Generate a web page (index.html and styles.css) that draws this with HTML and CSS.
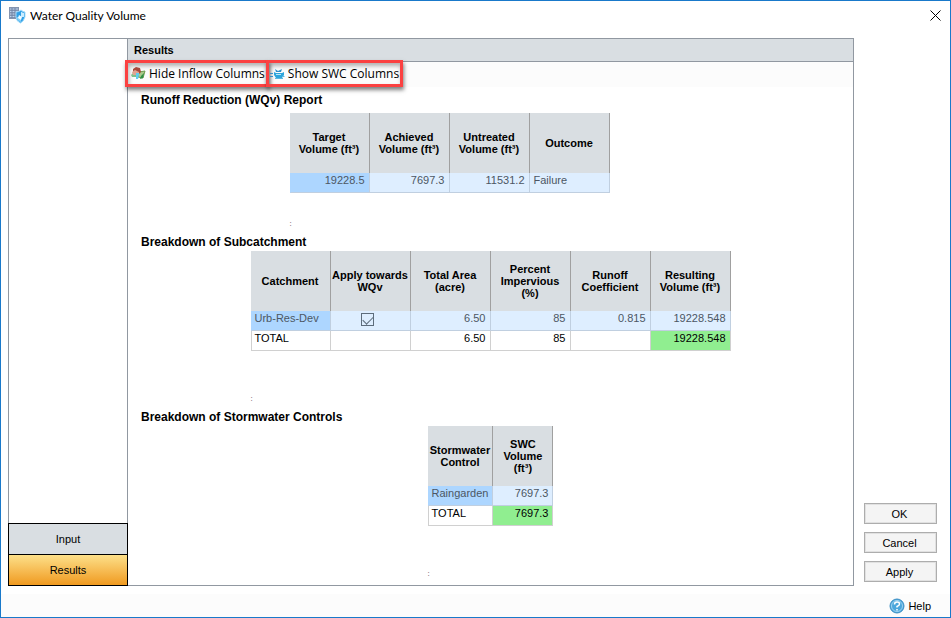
FILE: index.html
```html
<!DOCTYPE html>
<html lang="en">
<head>
    <meta charset="UTF-8">
    <title>Water Quality Volume</title>
    <link rel="stylesheet" href="styles.css">
</head>
<body>
    <div class="window">
        <header class="titlebar">
            <svg class="app-icon" width="17" height="17" viewBox="0 0 17 17">
                <rect x="0" y="0" width="10" height="12" fill="#8494b0"/>
                <path d="M1 2h8M1 4.5h8M1 7h8M1 9.5h8" stroke="#bfd3ec"/>
                <path d="M3 1v10M6 1v10" stroke="#6f84a8"/>
                <path d="M7 5q3 0 5-2 2 2 4 2v5q-1 4-4.500 6Q7 14 7 10z" fill="#2f9fe6" stroke="#a5dcfa"/>
                <path d="M12 4.5q1 1 3 1.500V10h-3z" fill="#c9ecff"/>
                <path d="M7.500 10H12v5q-4-1-4.500-5z" fill="#7fcdf7"/>
                <path d="M10 8l3 2-1 3-3-2z" fill="#f2fbff"/>
            </svg>
            <h1>Water Quality Volume</h1>
            <button class="close" type="button" aria-label="Close">
                <svg width="11" height="11" viewBox="0 0 11 11"><path d="M0.5 0.5l10 10M10.5 0.5l-10 10" stroke="#000" fill="none"/></svg>
            </button>
        </header>

        <div class="content">
            <nav class="sidebar">
                <button class="tab" type="button">Input</button>
                <button class="tab active" type="button">Results</button>
            </nav>

            <main class="panel">
                <h2 class="panel-title">Results</h2>
                <div class="toolbar">
                    <button class="tool hide-tool" type="button">
                        <svg width="15" height="13" viewBox="0 0 15 13">
                            <path d="M0 8l3-3 3 1v4H1z" fill="#7fc08b"/>
                            <path d="M8 5l6-1-2 7-5-1z" fill="#a9c98a" stroke="#6f9c4e"/>
                            <path d="M10 9l3-3-1 5-3 1z" fill="#2f8f45"/>
                            <path d="M2 5V2l3-2 4 1 1 4-2 2z" fill="#a8483c"/>
                            <path d="M1 5l3-2 4 2v3H2z" fill="#e0a592"/>
                            <path d="M5 6h3v2L7 12H5z" fill="#5fcdf0"/>
                        </svg>
                        Hide Inflow Columns
                    </button>
                    <button class="tool show-tool" type="button">
                        <svg width="15" height="13" viewBox="0 0 15 13">
                            <path d="M0 6.5h3M0 9.5h3" stroke="#3a8fc6"/>
                            <path d="M5 2l3 2 2-1 2-1-1 3H6z" fill="#2d8fc8"/>
                            <path d="M4 5l2 1h6l2-1v3l-2 3H6L4 8z" fill="#2da5dc"/>
                            <path d="M6 7.5h5" stroke="#b8e6f8"/>
                            <path d="M5 11.5h8M12 9.5h2.500" stroke="#5bb7e0"/>
                        </svg>
                        Show SWC Columns
                    </button>
                </div>

                <section class="report">
                    <h3>Runoff Reduction (WQv) Report</h3>
                    <div class="grid-wrap summary">
                        <table>
                            <thead>
                                <tr><th>Target<br>Volume (ft³)</th><th>Achieved<br>Volume (ft³)</th><th>Untreated<br>Volume (ft³)</th><th>Outcome</th></tr>
                            </thead>
                            <tbody>
                                <tr class="selected"><td class="current num">19228.5</td><td class="num">7697.3</td><td class="num">11531.2</td><td>Failure</td></tr>
                            </tbody>
                        </table>
                        <span class="mark">:</span>
                    </div>
                </section>

                <section class="report">
                    <h3>Breakdown of Subcatchment</h3>
                    <div class="grid-wrap">
                        <table>
                            <thead>
                                <tr><th>Catchment</th><th>Apply towards<br>WQv</th><th>Total Area<br>(acre)</th><th>Percent<br>Impervious<br>(%)</th><th>Runoff<br>Coefficient</th><th>Resulting<br>Volume (ft³)</th></tr>
                            </thead>
                            <tbody>
                                <tr class="selected"><td class="current">Urb-Res-Dev</td><td class="check"><input type="checkbox" aria-label="Apply towards WQv" checked></td><td class="num">6.50</td><td class="num">85</td><td class="num">0.815</td><td class="num">19228.548</td></tr>
                                <tr><td>TOTAL</td><td></td><td class="num">6.50</td><td class="num">85</td><td></td><td class="num total">19228.548</td></tr>
                            </tbody>
                        </table>
                        <span class="mark">:</span>
                    </div>
                </section>

                <section class="report">
                    <h3>Breakdown of Stormwater Controls</h3>
                    <div class="grid-wrap">
                        <table class="controls">
                            <thead>
                                <tr><th>Stormwater<br>Control</th><th>SWC<br>Volume<br>(ft³)</th></tr>
                            </thead>
                            <tbody>
                                <tr class="selected"><td class="current">Raingarden</td><td class="num">7697.3</td></tr>
                                <tr><td>TOTAL</td><td class="num total">7697.3</td></tr>
                            </tbody>
                        </table>
                        <span class="mark">:</span>
                    </div>
                </section>
            </main>

            <div class="actions">
                <button class="btn" type="button">OK</button>
                <button class="btn" type="button">Cancel</button>
                <button class="btn" type="button">Apply</button>
            </div>
        </div>

        <footer class="statusbar">
            <a class="help" href="#help">
                <svg width="16" height="16" viewBox="0 0 16 16">
                    <circle cx="8" cy="8" r="7" fill="#4aa6dc" stroke="#3d8fc4"/>
                    <circle cx="8" cy="8" r="5.5" fill="none" stroke="#9fd3f0"/>
                    <path d="M5.500 6.500q0-2.500 2.500-2.500t2.500 2q0 1.500-2.500 2.500v1M8 11v1.500" fill="none" stroke="#fff" stroke-width="1.500"/>
                </svg>
                Help
            </a>
        </footer>
    </div>
</body>
</html>
```
FILE: styles.css
```css
* {
    box-sizing: border-box;
}
body {
    margin: 0;
    font-family: "Liberation Sans", Arial, sans-serif;
    font-size: 11px;
    color: #000;
    background-color: #fff;
}
h1, h2, h3 {
    margin: 0;
}
button {
    font-family: inherit;
    font-size: inherit;
    color: inherit;
}
.window {
    display: flex;
    flex-direction: column;
    min-height: 100vh;
    border: 1px solid #1979ca;
}
.titlebar {
    display: flex;
    align-items: center;
    height: 29px;
    padding: 0 8px;
    gap: 4px;
}
.titlebar h1 {
    flex: 1;
    font-family: Lato, sans-serif;
    font-size: 12px;
    font-weight: normal;
}
.close {
    display: flex;
    padding: 1px;
    border: 0;
    background: none;
}
.content {
    display: flex;
    flex: 1;
    padding: 8px 13px 8px 7px;
}
.sidebar {
    display: flex;
    flex-direction: column;
    justify-content: flex-end;
    width: 120px;
    border: 1px solid #9198a1;
    border-bottom: 0;
}
.tab {
    height: 32px;
    margin: 0 -1px;
    border: 1px solid #000;
    background-color: #d9dee2;
}
.tab.active {
    margin-top: -1px;
    background: linear-gradient(#fde08a, #f09a20);
}
.panel {
    flex: 1;
    border: 1px solid #9198a1;
    border-left: 0;
}
.panel-title {
    height: 23px;
    padding: 0 6px;
    border-bottom: 1px solid #9198a1;
    background-color: #d9dee2;
    font-size: 11px;
    line-height: 22px;
}
.toolbar {
    display: flex;
    height: 25px;
    background-color: #fcfcfc;
}
.tool {
    display: flex;
    align-items: center;
    gap: 3px;
    height: 27px;
    margin: -2px 0 0 -3px;
    padding: 0 1px 0 3px;
    border: 3px solid #fb4141;
    background: none;
    font-family: "Open Sans", sans-serif;
    font-size: 12px;
    white-space: nowrap;
    box-shadow: 1px 3px 4px rgba(0, 0, 0, 0.5), inset 1px 3px 4px rgba(0, 0, 0, 0.3);
}
.show-tool {
    padding-left: 1px;
}
.report {
    padding-top: 4px;
}
.report h3 {
    padding: 0 13px;
    font-size: 12px;
    line-height: 18px;
}
.grid-wrap {
    width: fit-content;
    margin: 0 auto;
}
.summary {
    width: 402px;
    padding-top: 4px;
}
table {
    border-spacing: 0;
    table-layout: fixed;
}
th, td {
    width: 80px;
}
.controls th:first-child {
    width: 63px;
}
.controls th:last-child {
    width: 60px;
}
.controls td {
    width: auto;
}
th {
    height: 60px;
    padding: 0;
    border-right: 1px solid #a0a0a0;
    background-color: #d9dee2;
    line-height: 12px;
}
td {
    height: 20px;
    padding: 0 4px;
    border: 1px solid #d0d0d0;
    border-width: 0 1px 1px 0;
    line-height: 15px;
    vertical-align: top;
}
td:first-child {
    border-left-width: 1px;
    padding-left: 3px;
}
.mark {
    display: block;
    margin-top: 43px;
    color: #505050;
    font-size: 8px;
    line-height: 10px;
}
.summary .mark {
    margin-top: 26px;
}
.num {
    text-align: right;
}
.selected td {
    border-color: #c0cfe0;
    background-color: #deeeff;
    color: #4c5663;
}
.selected .current {
    border-left-color: #add6ff;
    background-color: #add6ff;
}
td.total {
    background-color: #90ee90;
}
.check {
    padding-right: 10px;
    text-align: center;
}
.check input {
    appearance: none;
    display: block;
    width: 13px;
    height: 13px;
    margin: 2px auto 0;
    border: 1px solid #5d6c7b;
}
.check input:checked::before {
    content: "";
    display: block;
    width: 9px;
    height: 5px;
    margin: 2px 1px;
    border: 1px solid #5d6c7b;
    border-width: 0 0 1px 1px;
    transform: rotate(-45deg);
}
.actions {
    display: flex;
    flex-direction: column;
    justify-content: flex-end;
    gap: 8px;
    width: 83px;
    padding: 0 0 4px 10px;
}
.btn {
    height: 21px;
    padding: 0 6px 0 4px;
    border: 1px solid #adadad;
    background-color: #f4f4f4;
    box-shadow: inset 0 0 0 1px #e1e1e1;
}
.statusbar {
    display: flex;
    justify-content: flex-end;
    height: 23px;
    padding: 0 19px;
    background-color: #fcfcfc;
}
.help {
    display: flex;
    align-items: center;
    gap: 3px;
    color: #000;
    text-decoration: none;
}
```
